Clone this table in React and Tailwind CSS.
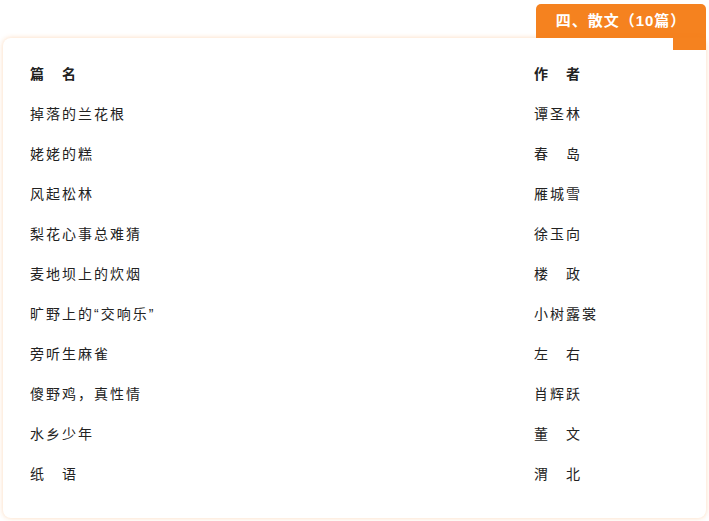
import React from 'react';

const rows = [
  ['掉落的兰花根', '谭圣林'],
  ['姥姥的糕', '春　岛'],
  ['风起松林', '雁城雪'],
  ['梨花心事总难猜', '徐玉向'],
  ['麦地坝上的炊烟', '楼　政'],
  ['旷野上的“交响乐”', '小树露裳'],
  ['旁听生麻雀', '左　右'],
  ['傻野鸡，真性情', '肖辉跃'],
  ['水乡少年', '董　文'],
  ['纸　语', '渭　北'],
];

export default function App() {
  return (
    <div
      className="w-[709px] h-[521px] bg-white px-[3px] pt-[4px] text-[#222]"
      style={{ fontFamily: '"Liberation Sans", "Noto Sans CJK SC", sans-serif' }}
    >
      {/* tab */}
      <div className="flex justify-end">
        <div className="h-[34px] w-[170px] bg-[#f5821f] rounded-t-[5px] text-white font-bold text-[15px] tracking-[1px] flex items-center justify-center">
          四、散文（10篇）
        </div>
      </div>

      {/* card */}
      <div className="relative h-[480px] rounded-[8px] bg-white shadow-[0_0_5px_rgba(245,130,31,0.3)] pt-[16px] pl-[27px]">
        <div className="absolute right-0 top-0 w-[33px] h-[12px] bg-[#f5821f]" />

        <div className="grid grid-cols-[504px_1fr] text-[14px] tracking-[2px] leading-[40px]">
          <div className="font-bold">篇　名</div>
          <div className="font-bold">作　者</div>
          {rows.map(([title, author]) => (
            <React.Fragment key={title}>
              <div>{title}</div>
              <div>{author}</div>
            </React.Fragment>
          ))}
        </div>
      </div>
    </div>
  );
}
